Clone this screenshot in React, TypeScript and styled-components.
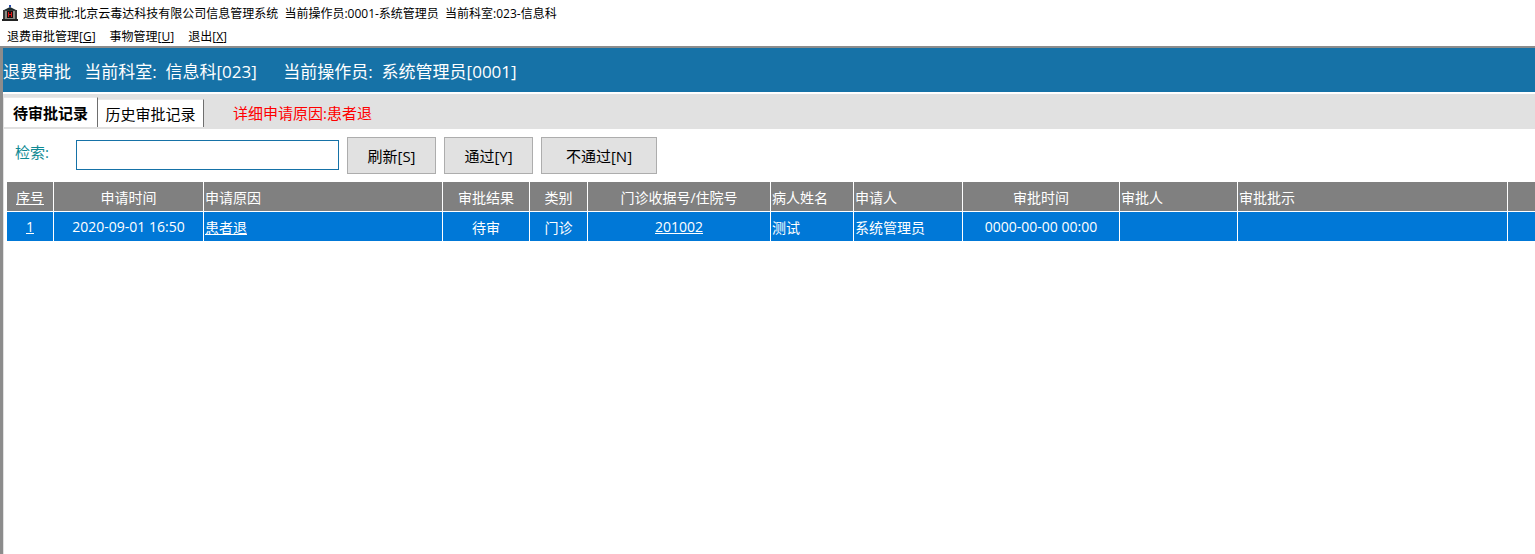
import React from 'react'
import styled, {createGlobalStyle} from 'styled-components'

const FONT = `"Open Sans", "Noto Sans CJK SC", sans-serif`

const GlobalStyle = createGlobalStyle`
  html, body {
    margin: 0;
    padding: 0;
    height: 100%;
    background: #fff;
    overflow: hidden;
    font-family: ${FONT};
  }
  #root {
    height: 100%;
  }
`

const Page = styled.div`
  width: 1535px;
  height: 554px;
  display: flex;
  flex-direction: column;
  overflow: hidden;
`

const TitleBar = styled.div`
  height: 26px;
  display: flex;
  align-items: center;
  padding-left: 2px;
  gap: 5px;
  font-size: 12px;
  color: #000;
  white-space: pre;
`

const MenuBar = styled.div`
  height: 20px;
  display: flex;
  align-items: center;
  padding-left: 7px;
  gap: 14px;
  font-size: 12px;
  color: #000;
`

const Underlined = styled.span`
  text-decoration: underline;
`

const Frame = styled.div`
  flex: 1;
  display: flex;
  flex-direction: column;
  min-height: 0;
  border-top: 2px solid #8c8c8c;
  border-left: 3px solid #8c8c8c;
  box-shadow: inset 0 0 0 0 #fff;
`

const Banner = styled.div`
  height: 44px;
  flex: none;
  background: #1672a7;
  color: #fff;
  display: flex;
  align-items: center;
  font-size: 17px;
  white-space: pre;
`

const TabStrip = styled.div`
  margin-top: 2px;
  height: 33px;
  flex: none;
  background: #e1e1e1;
  border-bottom: 2px solid #e1e1e1;
  display: flex;
  align-items: flex-end;
  padding-left: 1px;
`

const Tab = styled.div<{$active?: boolean}>`
  height: ${({$active}) => ($active ? 30 : 28)}px;
  width: ${({$active}) => ($active ? 94 : 106)}px;
  margin-bottom: ${({$active}) => ($active ? 0 : 0)}px;
  box-sizing: border-box;
  background: #fff;
  border-top: 1px solid #e8e8e8;
  border-right: 1px solid #6e6e6e;
  display: flex;
  align-items: center;
  justify-content: center;
  font-size: 15px;
  font-weight: ${({$active}) => ($active ? 700 : 400)};
  color: #000;
`

const Reason = styled.div`
  margin-left: 29px;
  height: 30px;
  display: flex;
  align-items: center;
  font-size: 15px;
  color: #ff0000;
`

const Content = styled.div`
  flex: 1;
  min-height: 0;
  border-left: 1px solid #e1e1e1;
  padding-left: 3px;
  display: flex;
  flex-direction: column;
`

const Toolbar = styled.div`
  height: 53px;
  flex: none;
  display: flex;
  align-items: flex-start;
  padding-top: 8px;
  box-sizing: border-box;
`

const SearchLabel = styled.label`
  width: 69px;
  padding-left: 8px;
  box-sizing: border-box;
  height: 30px;
  line-height: 30px;
  font-size: 15px;
  color: #0f8a94;
`

const SearchInput = styled.input`
  width: 263px;
  height: 30px;
  box-sizing: border-box;
  border: 1px solid #1672a7;
  outline: none;
  margin-top: 3px;
  background: #fff;
`

const ActionButton = styled.button<{$width: number}>`
  width: ${({$width}) => $width}px;
  height: 37px;
  box-sizing: border-box;
  margin-left: 8px;
  background: #e1e1e1;
  border: 1px solid #adadad;
  padding: 0;
  font-family: ${FONT};
  font-size: 15px;
  color: #000;
`

const Table = styled.div`
  display: flex;
  flex-direction: column;
  gap: 1px;
`

const Row = styled.div<{$header?: boolean}>`
  height: 29px;
  display: grid;
  grid-template-columns: 46px 149px 238px 86px 57px 182px 82px 108px 156px 117px 269px 27px;
  column-gap: 1px;
  background: #fff;
  & > * {
    background: ${({$header}) => ($header ? '#808080' : '#0078d7')};
  }
`

const Cell = styled.div<{$center?: boolean; $link?: boolean}>`
  display: flex;
  align-items: center;
  justify-content: ${({$center}) => ($center ? 'center' : 'flex-start')};
  padding-left: ${({$center}) => ($center ? 0 : 1)}px;
  font-size: 14px;
  color: #fff;
  white-space: nowrap;
  overflow: hidden;
  text-decoration: ${({$link}) => ($link ? 'underline' : 'none')};
`

interface Column {
  title: string
  center?: boolean
  link?: boolean
  headerLink?: boolean
  value: string
}

const COLUMNS: Column[] = [
  {title: '序号', center: true, link: true, headerLink: true, value: '1'},
  {title: '申请时间', center: true, value: '2020-09-01 16:50'},
  {title: '申请原因', link: true, value: '患者退'},
  {title: '审批结果', center: true, value: '待审'},
  {title: '类别', center: true, value: '门诊'},
  {title: '门诊收据号/住院号', center: true, link: true, value: '201002'},
  {title: '病人姓名', value: '测试'},
  {title: '申请人', value: '系统管理员'},
  {title: '审批时间', center: true, value: '0000-00-00 00:00'},
  {title: '审批人', value: ''},
  {title: '审批批示', value: ''},
  {title: '', value: ''},
]

const AppIcon = () => (
  <svg width="16" height="16" viewBox="0 0 16 16">
    <rect x="1" y="5" width="14" height="10" fill="#3a3a3a" />
    <rect x="0" y="14" width="16" height="2" fill="#222" />
    <path d="M2 5 L8 2 L14 5 Z" fill="#1c2c30" />
    <rect x="7" y="0" width="2" height="2" fill="#2a4fb0" />
    <rect x="3" y="6" width="10" height="8" fill="#8c8c84" />
    <rect x="5" y="6" width="6" height="7" fill="#1a1010" />
    <rect x="6" y="7" width="1" height="5" fill="#e01818" />
    <rect x="9" y="7" width="1" height="5" fill="#e01818" />
    <rect x="6" y="9" width="4" height="1" fill="#e01818" />
  </svg>
)

export default function App() {
  return (
    <Page>
      <GlobalStyle />
      <TitleBar>
        <AppIcon />
        退费审批:北京云毒达科技有限公司信息管理系统  当前操作员:0001-系统管理员  当前科室:023-信息科
      </TitleBar>
      <MenuBar>
        <span>退费审批管理[<Underlined>G</Underlined>]</span>
        <span>事物管理[<Underlined>U</Underlined>]</span>
        <span>退出[<Underlined>X</Underlined>]</span>
      </MenuBar>
      <Frame>
        <Banner>退费审批   当前科室:  信息科[023]      当前操作员:  系统管理员[0001]</Banner>
        <TabStrip>
          <Tab $active>待审批记录</Tab>
          <Tab>历史审批记录</Tab>
          <Reason>详细申请原因:患者退</Reason>
        </TabStrip>
        <Content>
          <Toolbar>
            <SearchLabel>检索:</SearchLabel>
            <SearchInput />
            <ActionButton $width={89}>刷新[S]</ActionButton>
            <ActionButton $width={89} style={{}}>通过[Y]</ActionButton>
            <ActionButton $width={116}>不通过[N]</ActionButton>
          </Toolbar>
          <Table>
            <Row $header>
              {COLUMNS.map((c, i) => (
                <Cell key={i} $center={c.center} $link={c.headerLink}>{c.title}</Cell>
              ))}
            </Row>
            <Row>
              {COLUMNS.map((c, i) => (
                <Cell key={i} $center={c.center} $link={c.link}>{c.value}</Cell>
              ))}
            </Row>
          </Table>
        </Content>
      </Frame>
    </Page>
  )
}
